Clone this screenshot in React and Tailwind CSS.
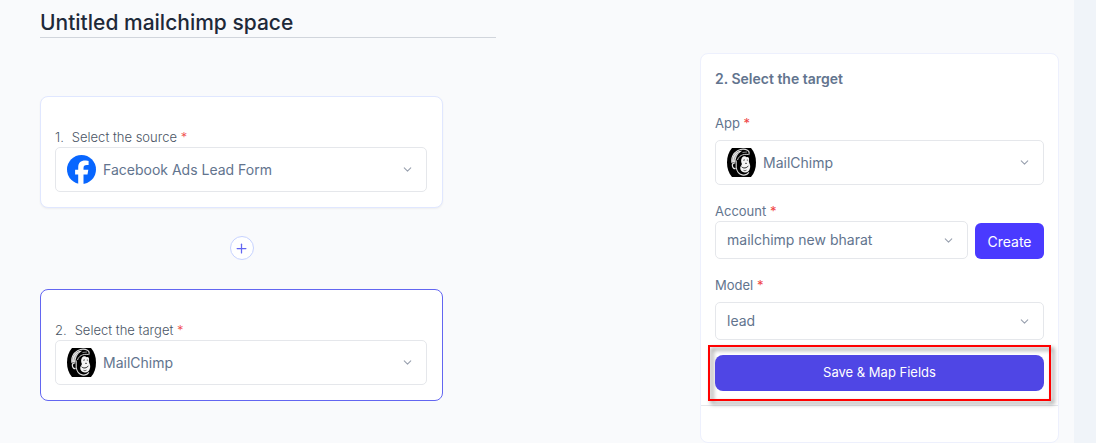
import React from 'react';
import { ChevronDown, Plus } from 'lucide-react';

const FacebookIcon = () => (
  <svg className="w-[29px] h-[29px] shrink-0" viewBox="0 0 29 29" aria-hidden="true">
    <circle cx="14.5" cy="14.5" r="14.5" fill="#0866ff" />
    <path
      d="M11.2 29v-9.6H8.1v-4.6h3.1v-1.9c0-5 2.300-7.300 7.200-7.300.9 0 2.500.2 3.200.4v4.100c-.4 0-1-.1-1.800-.1-2.400 0-3.300.9-3.300 3.200v1.600h4.800l-.8 4.600h-4V29z"
      fill="#fff"
    />
  </svg>
);

const MailchimpIcon = () => (
  <svg className="w-[29px] h-[29px] shrink-0" viewBox="0 0 29 29" fill="none" aria-hidden="true">
    <path d="M5 0h19c3.300 3.500 5 8.800 5 14.500S27.300 25.500 24 29H5C1.700 25.500 0 20.200 0 14.500S1.700 3.500 5 0z" fill="#000" />
    {/* cap and headband */}
    <path d="M5 15C3.800 10 6.500 5 10.500 2.700c3-1.600 7.400-1.800 10-.5 1.800 1 2 2.800 1.200 4.800" stroke="#ddd" strokeWidth="1.100" />
    <path d="M5.200 14.500c-.6-4 1.300-8 4.600-10.400 1.800-1.200 3.800-1.600 5.400-1.300-4 2.200-6.400 5.800-6.600 11z" fill="#e4e4e4" />
    <path d="M7 12.500c.6-3.500 2.300-6.200 5-8.200" stroke="#888" strokeWidth=".6" />
    <path d="M10.500 12c1.300-3.800 4.800-6.300 10.700-5.500" stroke="#ccc" strokeWidth="1" />
    <path d="M15.500 4.500l4.500-.5" stroke="#aaa" strokeWidth=".8" />
    {/* ear */}
    <path d="M8.300 15c-2-.6-3.200.9-2.900 3 .3 1.900 1.700 3 3.200 2.400" stroke="#e5e5e5" strokeWidth="1.300" />
    <path d="M9.200 12.500v7c.6 3.800 2.600 6.600 6 7.400 2.600.6 5.300-.3 6.700-2.500" stroke="#ddd" strokeWidth="1.100" />
    {/* face */}
    <path d="M14.800 10c1-2.100 3.700-2.300 4.700-.8 1.700-.6 3 .9 2.500 2.800-.3 1.200 0 2.300.5 3.500.8 1.700.9 3.200.4 5-.6 2.600-2.700 4.200-5.100 4-2.900-.2-4.700-2.200-4.600-4.700.1-1.500 1.400-2.400 1.700-3.900-.9-1.700-1.100-4-.1-5.900z" fill="#f4f4f4" />
    <path d="M14.600 18.800c2 1.900 4.900 1.400 6.800-1" stroke="#222" strokeWidth="1" />
    <path d="M16.200 12.300l1.800-.5M19.800 12.100h1.200M18 15.300l2 .1M16.500 22.300c1 .5 2.100.4 3-.1" stroke="#333" strokeWidth=".8" />
  </svg>
);

const Required = () => <span className="text-[13px] text-[#ef4444]">*</span>;

const SelectBox = ({ id, value, icon, className = 'h-[45px]' }) => (
  <div className={`flex items-center gap-[7px] rounded-[5px] border border-gray-200 bg-white pl-[11px] pr-3 ${className}`}>
    {icon}
    <select
      id={id}
      defaultValue={value}
      className="min-w-0 flex-1 appearance-none bg-transparent text-[14px] leading-5 text-slate-500 outline-none"
    >
      <option>{value}</option>
    </select>
    <ChevronDown size={13} strokeWidth={2} className="shrink-0 text-gray-400" />
  </div>
);

const StepCard = ({ id, step, label, value, icon, active }) => (
  <section
    className={`rounded-lg border bg-white pt-[30px] pr-[15px] pb-[15px] pl-[14px] ${
      active ? 'border-[#6366f1]' : 'border-indigo-100 shadow-xs'
    }`}
  >
    <label htmlFor={id} className="flex items-center text-[13px] leading-5 font-light text-gray-600">
      <span className="mr-2">{step}.</span>
      <span>{label} <Required /></span>
    </label>
    <SelectBox id={id} value={value} icon={icon} />
  </section>
);

const FieldLabel = ({ htmlFor, children }) => (
  <label htmlFor={htmlFor} className="block text-[13px] leading-5 text-slate-500">
    {children} <Required />
  </label>
);

const TargetPanel = () => (
  <aside className="w-[359px] shrink-0 self-start rounded-lg border border-[#edf0fd] bg-white">
    <form className="border-b border-gray-200 px-[14px] pt-[15px] pb-[14px]" onSubmit={(e) => e.preventDefault()}>
      <h2 className="text-[14px] font-semibold leading-5 text-slate-500">2. Select the target</h2>

      <div className="mt-6 space-y-[7px]">
        <FieldLabel htmlFor="app">App</FieldLabel>
        <SelectBox id="app" value="MailChimp" icon={<MailchimpIcon />} />
      </div>

      <div className="mt-4">
        <FieldLabel htmlFor="account">Account</FieldLabel>
        <div className="flex items-end gap-[7px]">
          <SelectBox id="account" value="mailchimp new bharat" className="h-[38px] min-w-0 flex-1" />
          <button type="button" className="h-9 w-[69px] rounded-md bg-[#4a3aff] text-[14px] text-white">
            Create
          </button>
        </div>
      </div>

      <div className="mt-4 space-y-[7px]">
        <FieldLabel htmlFor="model">Model</FieldLabel>
        <SelectBox id="model" value="lead" className="h-[38px]" />
      </div>

      <div className="relative mt-[15px]">
        <div className="pointer-events-none absolute -inset-x-[7px] -inset-y-[10px] border-2 border-[#f00] drop-shadow-[3px_3px_2px_rgba(0,0,0,0.5)]" />
        <button type="submit" className="relative block h-9 w-full rounded-lg bg-[#4f46e5] text-[13px] text-white">
          Save &amp; Map Fields
        </button>
      </div>
    </form>
    <div className="h-9" />
  </aside>
);

export default function App() {
  return (
    <div className="flex min-h-screen bg-[#f0f4f9] pr-[22px] font-['Inter',sans-serif]">
      <div className="min-w-0 flex-1 bg-[#f9fafc]">
        <header className="pl-10">
          <input
            type="text"
            aria-label="Space name"
            defaultValue="Untitled mailchimp space"
            className="block h-[38px] w-full max-w-[456px] border-b border-gray-300 bg-transparent pt-[7px] text-[21px] font-medium text-gray-800 outline-none"
          />
        </header>

        <div className="flex justify-between gap-6 pt-[15px] pr-[15px] pl-10">
          <main className="max-w-[403px] flex-1 pt-[43px]">
            <StepCard
              id="source"
              step={1}
              label="Select the source"
              value="Facebook Ads Lead Form"
              icon={<FacebookIcon />}
            />
            <div className="flex justify-center pt-7 pb-[29px]">
              <button
                type="button"
                aria-label="Add step"
                className="flex h-6 w-6 items-center justify-center rounded-full border border-indigo-200 bg-white text-[#6366f1]"
              >
                <Plus size={15} strokeWidth={2} />
              </button>
            </div>
            <StepCard
              id="target"
              step={2}
              label="Select the target"
              value="MailChimp"
              icon={<MailchimpIcon />}
              active
            />
          </main>
          <TargetPanel />
        </div>
      </div>
    </div>
  );
}
